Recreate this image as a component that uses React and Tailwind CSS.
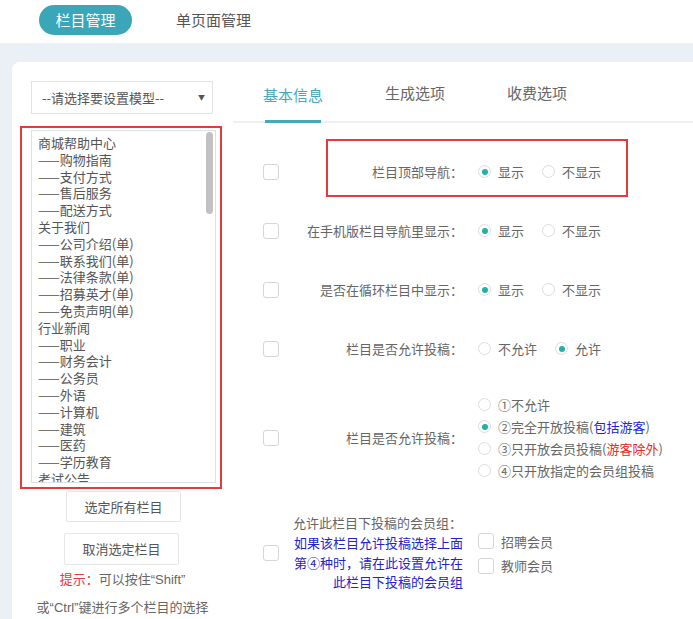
import React from "react";

const font = { fontFamily: '"Noto Sans CJK SC", "Noto Sans", sans-serif' };

const items = [
  "商城帮助中心", "——购物指南", "——支付方式", "——售后服务", "——配送方式",
  "关于我们", "——公司介绍(单)", "——联系我们(单)", "——法律条款(单)", "——招募英才(单)", "——免责声明(单)",
  "行业新闻", "——职业", "——财务会计", "——公务员", "——外语", "——计算机", "——建筑", "——医药", "——学历教育", "考试公告", "——报名",
];

function Q({ children }) {
  return <span style={{ fontFamily: '"Liberation Sans", sans-serif' }}>{children}</span>;
}

function Checkbox() {
  return <span className="block w-[16px] h-[16px] rounded-[3px] border border-[#d6d6d6] bg-white shrink-0" />;
}

function Radio({ checked, children }) {
  return (
    <span className="flex items-center gap-[7px]">
      <span className="w-[13px] h-[13px] rounded-full border border-[#dcdcdc] flex items-center justify-center shrink-0 bg-white">
        {checked && <span className="w-[6px] h-[6px] rounded-full bg-[#20b3a3]" />}
      </span>
      <span>{children}</span>
    </span>
  );
}

function Row({ label, children, h, boxed }) {
  return (
    <div className={`flex items-center pl-[30px] ${h}`}>
      <Checkbox />
      <div className="relative flex items-center">
        <div className="w-[184px] text-right">{label}</div>
        <div className="flex items-center gap-[18px] pl-[15px]">{children}</div>
        {boxed && (
          <div className="absolute left-[47px] top-[-23px] w-[302px] h-[58px] border-2 border-[#e23b3b]" />
        )}
      </div>
    </div>
  );
}

export default function App() {
  return (
    <div className="w-[693px] h-[619px] overflow-hidden bg-[#ebeff6] text-[13px] text-[#666]" style={font}>
      <div className="h-[43px] bg-white flex items-start pt-[5px]">
        <div className="ml-[39px] w-[93px] h-[30px] rounded-full bg-[#3ba6b8] text-white text-[15px] flex items-center justify-center">
          栏目管理
        </div>
        <div className="ml-[44px] h-[30px] flex items-center text-[15px] text-[#555]">单页面管理</div>
      </div>
      <div className="pt-[19px] pl-[12px]">
        <div className="bg-white rounded-tl-[8px] h-[560px] flex">
          {/* left column */}
          <div className="w-[221px] shrink-0 flex flex-col">
            <div className="mt-[19px] ml-[19px] w-[182px] h-[33px] border border-[#e2e2e2] flex items-center justify-between pl-[10px] pr-[7px] text-[#555]">
              <span>--请选择要设置模型--</span>
              <span className="text-[7px] text-[#555]">▼</span>
            </div>
            <div className="mt-[12px] ml-[8px] w-[202px] h-[363px] border-2 border-[#e23b3b] pt-[2px] pl-[9px] pr-[4px] pb-[4px]">
              <div className="h-full border border-[#d9e3e6] flex overflow-hidden">
                <div className="flex-1 pl-[6px] pt-[4px] leading-[16.8px] text-[#555] overflow-hidden">
                  {items.map((t, i) => (
                    <div key={i} className="whitespace-nowrap">{t}</div>
                  ))}
                </div>
                <div className="w-[9px] pt-[1px] pr-[1px]">
                  <div className="w-[7px] h-[82px] rounded-full bg-[#c1c1c1]" />
                </div>
              </div>
            </div>
            <div className="mt-[2px] flex flex-col items-center">
              <div className="w-[115px] h-[31px] border border-[#e6e6e6] rounded-[2px] flex items-center justify-center text-[#555] ml-[2px]">
                选定所有栏目
              </div>
              <div className="mt-[11px] w-[115px] h-[32px] border border-[#e6e6e6] rounded-[2px] flex items-center justify-center text-[#555] mr-[2px]">
                取消选定栏目
              </div>
              <div className="mt-[6px] leading-[16px]">
                <span className="text-[#e23b3b]">提示：</span>可以按住<Q>“Shift”</Q>
              </div>
              <div className="mt-[11px] leading-[16px]">或<Q>“Ctrl”</Q>键进行多个栏目的选择</div>
            </div>
          </div>
          {/* right column */}
          <div className="flex-1 flex flex-col">
            <div className="h-[61px] border-b-2 border-[#edf1f2] flex items-end pl-[30px] gap-[62px] text-[15px]">
              <div className="h-full flex flex-col justify-end items-center">
                <span className="text-[#45a9bb] mb-[14px]">基本信息</span>
                <span className="block w-[56px] h-[3px] bg-[#45a9bb] mb-[-2px]" />
              </div>
              <div className="h-full flex items-end"><span className="mb-[17px] text-[#666]">生成选项</span></div>
              <div className="h-full flex items-end"><span className="mb-[17px] text-[#666]">收费选项</span></div>
            </div>
            <div className="pt-[19px]">
              <Row label="栏目顶部导航：" h="h-[59px]" boxed>
                <Radio checked>显示</Radio>
                <Radio>不显示</Radio>
              </Row>
              <Row label="在手机版栏目导航里显示：" h="h-[59px]">
                <Radio checked>显示</Radio>
                <Radio>不显示</Radio>
              </Row>
              <Row label="是否在循环栏目中显示：" h="h-[59px]">
                <Radio checked>显示</Radio>
                <Radio>不显示</Radio>
              </Row>
              <Row label="栏目是否允许投稿：" h="h-[59px]">
                <Radio>不允许</Radio>
                <Radio checked>允许</Radio>
              </Row>
              <div className="flex items-center pl-[30px] h-[119px]">
                <Checkbox />
                <div className="w-[184px] text-right">栏目是否允许投稿：</div>
                <div className="pl-[15px] flex flex-col gap-[5px] leading-[17px]">
                  <Radio>①不允许</Radio>
                  <Radio checked>②完全开放投稿(<span className="text-[#2323d6]">包括游客</span>)</Radio>
                  <Radio>③只开放会员投稿(<span className="text-[#e62a2a]">游客除外</span>)</Radio>
                  <Radio>④只开放指定的会员组投稿</Radio>
                </div>
              </div>
              <div className="flex items-center pl-[30px] h-[111px]">
                <Checkbox />
                <div className="w-[184px] flex justify-end">
                  <div className="w-[170px] text-right leading-[19.7px]">
                    <div className="text-left">允许此栏目下投稿的会员组：</div>
                    <div className="text-[#2323c8]">如果该栏目允许投稿选择上面第④种时，请在此设置允许在此栏目下投稿的会员组</div>
                  </div>
                </div>
                <div className="pl-[15px] flex flex-col gap-[5px] pt-[2px]">
                  <span className="flex items-center gap-[7px]"><Checkbox />招聘会员</span>
                  <span className="flex items-center gap-[7px]"><Checkbox />教师会员</span>
                </div>
              </div>
            </div>
          </div>
        </div>
      </div>
    </div>
  );
}
